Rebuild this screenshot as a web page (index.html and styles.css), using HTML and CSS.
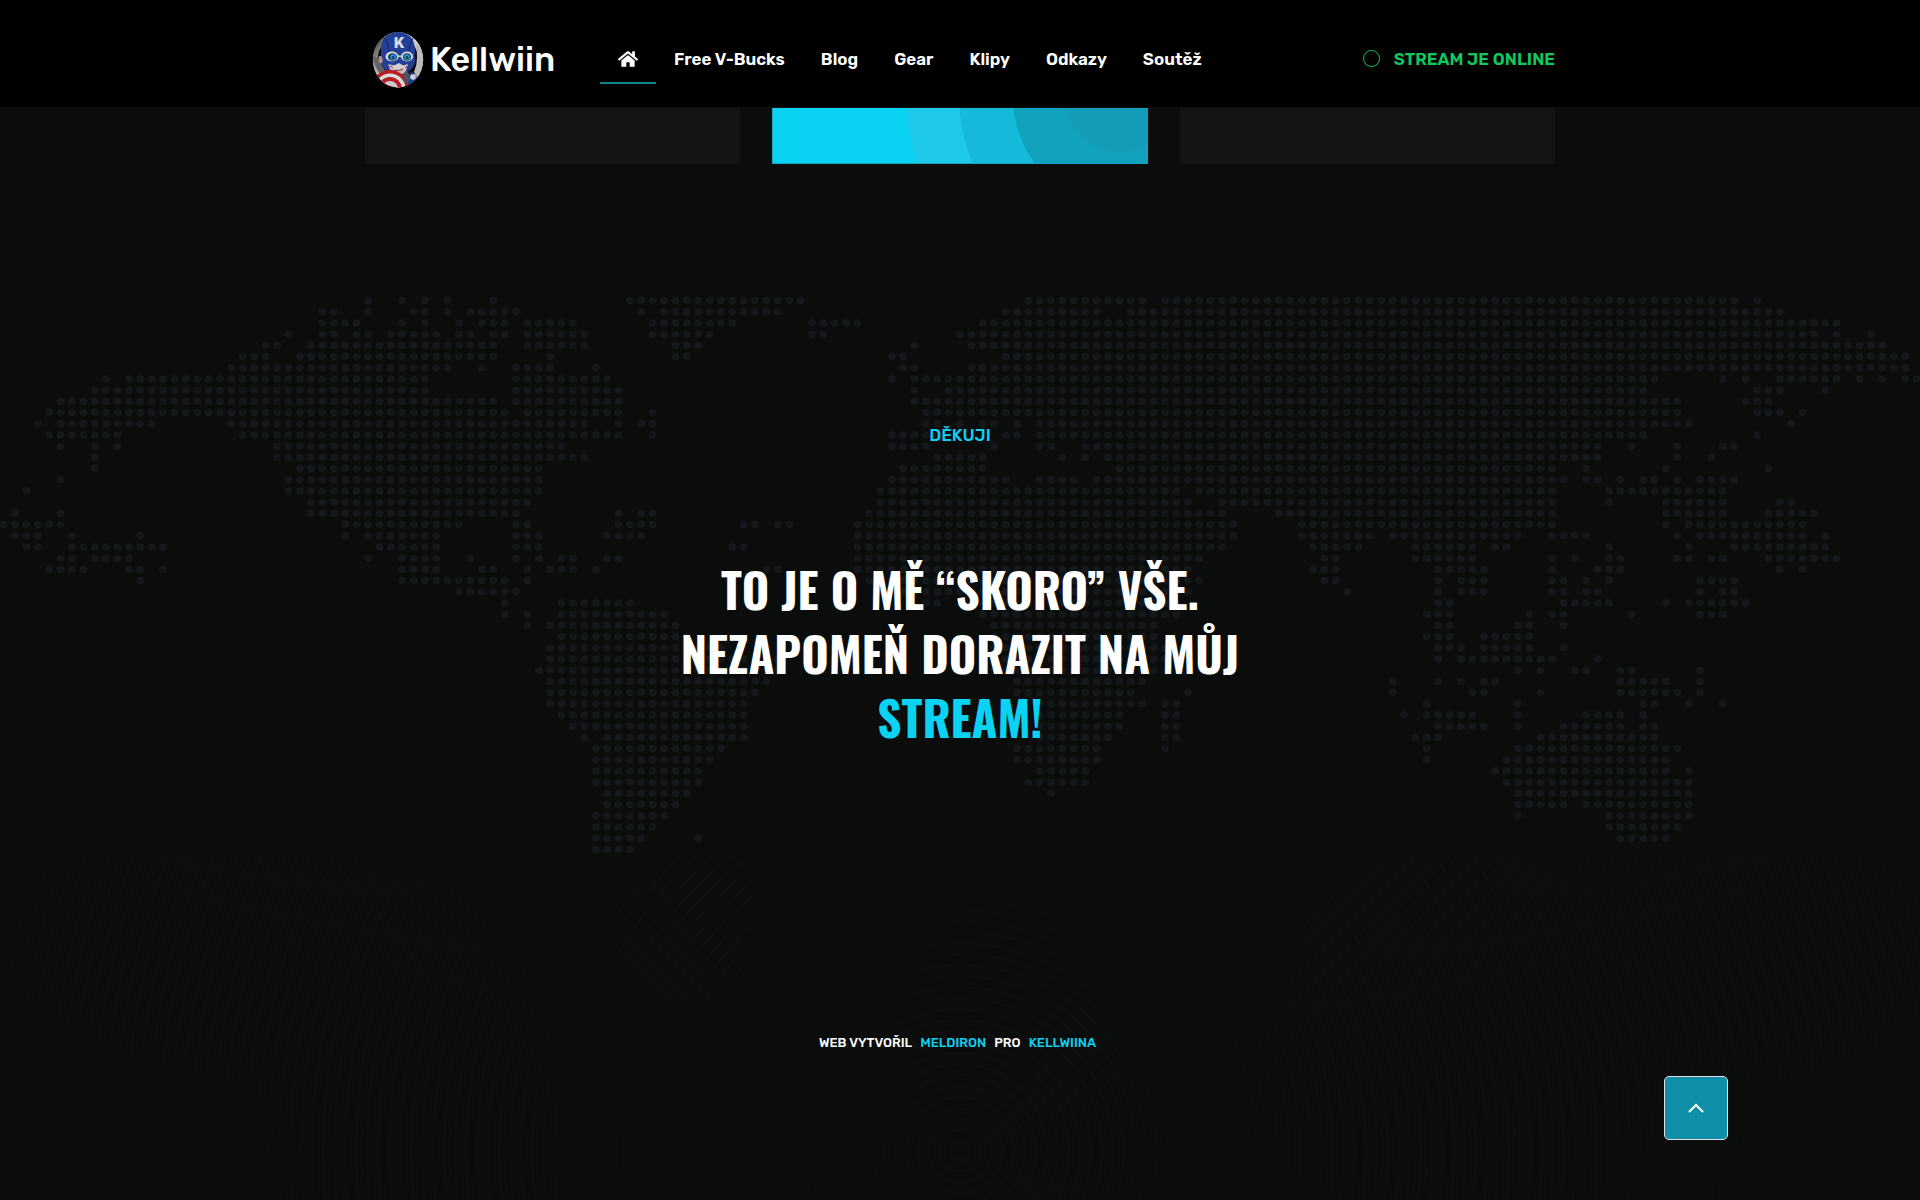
FILE: index.html
```html
<!DOCTYPE html>
<html lang="cs">
<head>
<meta charset="utf-8">
<meta name="viewport" content="width=device-width, initial-scale=1">
<title>Kellwiin</title>
<link rel="stylesheet" href="styles.css">
</head>
<body>
<header class="header">
  <div class="container header-row">
    <a class="brand" href="#">
      <svg class="avatar" viewBox="7 11 53 57" aria-hidden="true">
        <defs>
          <linearGradient id="ring" x1="0" y1="0" x2="1" y2="1"><stop offset="0" stop-color="#3c3c3e"/><stop offset=".5" stop-color="#d4d4d4"/><stop offset="1" stop-color="#77777a"/></linearGradient>
          <clipPath id="disc"><ellipse cx="33" cy="39.500" rx="25.500" ry="28"/></clipPath>
        </defs>
        <g clip-path="url(#disc)">
          <ellipse cx="33" cy="39.500" rx="25.500" ry="28" fill="#08090b"/>
          <ellipse cx="33" cy="40" rx="23" ry="25.500" fill="none" stroke="url(#ring)" stroke-width="5"/>
          <path d="M53 24q5 7 5 16t-5 17l-4-5q3-7 3-14t-1-11z" fill="#b9babc"/>
          <path d="M8 36q6 2 8 8 3 5 6 9l-6 2q-7-8-8-19z" fill="#626469"/>
          <path d="M23 55l9-3 9 3 7-3q4 6 8 13l-12 6H22z" fill="#213e8c"/>
          <path d="M16 42V28q1-15 17-16 16 1 17 17v13q-2 10-16 13Q19 53 16 42z" fill="#243f96"/>
          <path d="M14 36q3-1 4 5l-2 3q-4-3-2-8z" fill="#b78c8c"/>
          <path d="M18 17q5 4 6 14M48 18q-4 5-4 13" fill="none" stroke="#152665" stroke-width="1"/>
          <path d="M23 44q11 3 20 0l-2 7q-3 4-7 4-6-1-8-4z" fill="#cdb6b7"/>
          <path d="M28 46l6-3 5 3 2 4q-4-1-6-2l-5 2q-4 0-6-2z" fill="#cfd2d3"/>
          <path d="M29 50q5 2 9-1M25 46l3 2M40 48l3-2" stroke="#963439" stroke-width="1" fill="none"/>
          <ellipse cx="27" cy="36.500" rx="6.500" ry="5" fill="#d3d7dd"/>
          <ellipse cx="42" cy="36.500" rx="6" ry="5" fill="#d3d7dd"/>
          <ellipse cx="27.500" cy="37" rx="4.500" ry="3.800" fill="#26334f"/>
          <ellipse cx="42" cy="37" rx="4" ry="3.800" fill="#26334f"/>
          <circle cx="28" cy="37" r="3" fill="#2490c6"/><circle cx="42" cy="37" r="3" fill="#2490c6"/>
          <circle cx="28" cy="37.500" r="1.300" fill="#0c3049"/><circle cx="42" cy="37.500" r="1.300" fill="#0c3049"/>
          <path d="M33 37q2-2 3 0" stroke="#c5c8cf" stroke-width="1.500" fill="none"/>
          <circle cx="25" cy="69" r="19" fill="#b91d22"/>
          <circle cx="25" cy="69" r="15.500" fill="#d9dadc"/>
          <circle cx="25" cy="69" r="12" fill="#b91d22"/>
          <circle cx="25" cy="69" r="8" fill="#c7cbd4"/>
          <path d="M39 53l4-2 2 8-3 5-4-4z" fill="#4b5360"/>
          <circle cx="48" cy="57" r="2.800" fill="#ced2dd"/>
        </g>
        <text class="avatar-letter" x="29" y="28">K</text>
      </svg>
      <span>Kellwiin</span>
    </a>
    <nav class="nav" aria-label="Hlavní">
      <a class="nav-link active" href="#" aria-label="Domů">
        <svg class="home" viewBox="0 0 576 512" aria-hidden="true"><path fill="currentColor" d="M280.400 148.300L96 300.100V464a16 16 0 0 0 16 16l112.100-.3a16 16 0 0 0 15.900-16V368a16 16 0 0 1 16-16h64a16 16 0 0 1 16 16v95.600a16 16 0 0 0 16 16.100L464 480a16 16 0 0 0 16-16V300L295.700 148.300a12.200 12.200 0 0 0-15.300 0zM571.600 251.500L488 182.600V44a12 12 0 0 0-12-12h-56a12 12 0 0 0-12 12v72.600L318.500 43a48 48 0 0 0-61 0L4.300 251.500a12 12 0 0 0-1.600 16.900l25.500 31a12 12 0 0 0 16.900 1.600l235.300-193.700a12.200 12.200 0 0 1 15.300 0L531 301a12 12 0 0 0 16.900-1.600l25.500-31a12 12 0 0 0-1.800-16.900z"/></svg>
      </a>
      <a class="nav-link" href="#">Free V-Bucks</a>
      <a class="nav-link" href="#">Blog</a>
      <a class="nav-link" href="#">Gear</a>
      <a class="nav-link" href="#">Klipy</a>
      <a class="nav-link" href="#">Odkazy</a>
      <a class="nav-link" href="#">Soutěž</a>
    </nav>
    <a class="status" href="#"><span class="status-ring"></span>STREAM JE ONLINE</a>
  </div>
</header>
<main>
  <section class="container cards" aria-label="Karty">
    <div class="card"></div>
    <div class="card card-accent"></div>
    <div class="card"></div>
  </section>
  <section class="thanks">
    <svg class="map" viewBox="-.325 -.5 168.640 50" preserveAspectRatio="none" aria-hidden="true">
      <path d="M32 0h.1M35 0h.1M37 0h.1M39 0h.1M43 0h.1M55 0h15.100M90 0h10.100M102 0h50.100M154 0h.1
M28 1h1.100M32 1h.1M36 1h1.100M39 1h.1M41 1h4.100M56 1h.1M58 1h10.100M88 1h8.100M99 1h57.100
M28 2h3.100M35 2h.1M37 2h.1M40 2h.1M42 2h2.100M46 2h4.100M57 2h7.100M71 2h4.100M86 2h75.100
M25 3h.1M28 3h1.100M31 3h1.100M34 3h4.100M40 3h1.100M43 3h1.100M46 3h5.100M57 3h5.100M71 3h1.100M84 3h75.100M161 3h.1M164 3h.1
M23 4h1.100M27 4h16.100M46 4h5.100M59 4h2.100M80 4h.1M85 4h80.100
M21 5h2.100M26 5h17.100M48 5h.1M59 5h1.100M78 5h1.100M88 5h79.100
M20 6h19.100M42 6h.1M45 6h3.100M52 6h.1M79 6h1.100M85 6h82.100
M9 7h.1M11 7h26.100M45 7h8.100M78 7h.1M80 7h65.100M151 7h.1M153 7h.1M156 7h5.100M163 7h.1M165 7h.1M167 7h1.100
M8 8h29.100M45 8h9.100M80 8h.1M83 8h61.100M154 8h2.100M160 8h.1
M5 9h38.100M45 9h9.100M80 9h67.100M153 9h2.100
M4 10h40.100M46 10h8.100M57 10h.1M81 10h66.100M154 10h2.100M158 10h.1
M3 11h.1M5 11h8.100M20 11h31.100M54 11h.1M56 11h1.100M81 11h1.100M84 11h.1M86 11h1.100M89 11h.1M91 11h57.100M157 11h.1
M4 12h6.100M21 12h33.100M57 12h.1M78 12h4.100M88 12h1.100M91 12h53.100M154 12h.1
M5 13h.1M8 13h.1M10 13h.1M24 13h25.100M78 13h3.100M87 13h.1M91 13h1.100M95 13h45.100M143 13h.1M147 13h.1M151 13h1.100
M8 14h.1M24 14h27.100M82 14h4.100M93 14h.1M95 14h.1M97 14h43.100M147 14h.1M150 14h.1
M8 15h.1M26 15h21.100M79 15h7.100M98 15h38.100M139 15h.1M146 15h.1M155 15h.1
M5 16h.1M25 16h22.100M78 16h10.100M91 16h3.100M96 16h41.100M139 16h1.100M142 16h.1M144 16h1.100M147 16h.1M149 16h3.100
M2 17h.1M25 17h22.100M77 17h26.100M105 17h31.100M141 17h10.100
M27 18h19.100M77 18h27.100M107 18h29.100M141 18h.1M146 18h5.100M156 18h1.100
M1 19h.1M5 19h.1M27 19h18.100M54 19h.1M56 19h1.100M76 19h31.100M112 19h24.100M146 19h5.100M155 19h4.100
M0 20h5.100M30 20h10.100M45 20h1.100M54 20h3.100M65 20h1.100M68 20h1.100M75 20h33.100M114 20h22.100M146 20h.1M148 20h10.100
M1 21h2.100M6 21h.1M12 21h.1M30 21h.1M32 21h6.100M45 21h2.100M53 21h3.100M75 21h33.100M114 21h6.100M122 21h11.100M136 21h3.100M147 21h.1M149 21h9.100M160 21h.1
M2 22h1.100M6 22h8.100M33 22h5.100M45 22h2.100M64 22h1.100M75 22h32.100M115 22h4.100M124 22h5.100M131 22h1.100M141 22h.1M148 22h.1M152 22h8.100
M5 23h1.100M8 23h3.100M32 23h.1M35 23h3.100M41 23h.1M45 23h.1M47 23h.1M49 23h1.100M53 23h1.100M75 23h30.100M116 23h1.100M124 23h5.100M136 23h.1M138 23h.1M141 23h1.100M147 23h1.100M150 23h1.100M155 23h6.100
M4 24h3.100M11 24h1.100M14 24h.1M35 24h3.100M42 24h1.100M46 24h.1M48 24h2.100M52 24h.1M67 24h1.100M75 24h29.100M115 24h2.100M126 24h4.100M136 24h.1M140 24h2.100M156 24h.1M158 24h.1
M12 25h.1M35 25h9.100M46 25h.1M76 25h29.100M116 25h1.100M126 25h.1M128 25h2.100M136 25h1.100M139 25h.1M141 25h.1M149 25h3.100
M40 26h5.100M77 26h27.100M118 26h.1M126 26h.1M128 26h2.100M136 26h1.100M139 26h1.100M149 26h.1M151 26h1.100
M44 27h.1M49 27h6.100M81 27h1.100M85 27h18.100M126 27h1.100M137 27h4.100M146 27h.1M148 27h5.100
M44 28h.1M46 28h.1M49 28h9.100M86 28h17.100M125 28h2.100M134 28h.1M136 28h1.100M143 28h.1M149 28h2.100
M46 29h.1M48 29h11.100M87 29h14.100M126 29h1.100M133 29h1.100M137 29h.1
M49 30h11.100M87 30h14.100M125 30h2.100M130 30h4.100
M48 31h15.100M87 31h15.100M126 31h2.100M130 31h4.100M137 31h.1
M48 32h20.100M87 32h15.100M126 32h.1M128 32h8.100M140 32h.1
M47 33h21.100M87 33h14.100M133 33h.1M135 33h.1M138 33h1.100M142 33h1.100M149 33h.1
M48 34h19.100M89 34h11.100M122 34h.1M126 34h.1M128 34h.1M130 34h1.100M142 34h4.100M149 34h.1
M48 35h18.100M89 35h10.100M104 35h.1M122 35h.1M129 35h1.100M135 35h.1M142 35h5.100M149 35h.1
M48 36h17.100M91 36h9.100M102 36h1.100M125 36h.1M133 36h.1M144 36h1.100M148 36h.1M151 36h.1
M49 37h16.100M91 37h7.100M102 37h1.100M123 37h.1M125 37h4.100M133 37h.1M139 37h3.100M144 37h.1
M50 38h15.100M91 38h7.100M102 38h1.100M126 38h4.100M133 38h.1M137 38h5.100M144 38h1.100
M51 39h.1M53 39h12.100M91 39h6.100M102 39h1.100M124 39h2.100M135 39h10.100
M52 40h11.100M89 40h7.100M102 40h.1M125 40h.1M133 40h14.100
M52 41h10.100M89 41h7.100M125 41h.1M132 41h14.100
M52 42h9.100M91 42h4.100M131 42h15.100M148 42h.1
M52 43h9.100M90 43h5.100M132 43h16.100
M53 44h7.100M92 44h.1M133 44h15.100
M53 45h6.100M133 45h4.100M139 45h9.100
M52 46h6.100M133 46h.1M141 46h7.100
M52 47h5.100M141 47h6.100
M52 48h4.100M61 48h.1M142 48h4.100
M52 49h3.100"/>
    </svg>
    <div class="thanks-text">
      <p class="eyebrow">DĚKUJI</p>
      <h2 class="title">TO JE O MĚ “SKORO” VŠE.<br>NEZAPOMEŇ DORAZIT NA MŮJ<br><a href="#">STREAM!</a></h2>
    </div>
  </section>
</main>
<footer class="footer">
  <p class="credits">WEB VYTVOŘIL <a href="#">MELDIRON</a> PRO <a href="#">KELLWIINA</a></p>
</footer>
<button class="to-top" type="button" aria-label="Nahoru">
  <svg viewBox="0 0 18 12" aria-hidden="true"><path d="M2 10l7-7 7 7" fill="none" stroke="currentColor" stroke-width="2"/></svg>
</button>
</body>
</html>
```
FILE: styles.css
```css
* { box-sizing: border-box; }
body {
  margin: 0;
  min-height: 100vh;
  display: flex;
  flex-direction: column;
  background: #0a0d0c;
  color: #fff;
  font-family: Rubik, Inter, "Noto Sans", sans-serif;
  font-size: 17px;
  font-weight: 500;
}
a { color: inherit; text-decoration: none; }
.container { width: 100%; max-width: 1190px; margin: 0 auto; }

.header {
  position: sticky;
  top: 0;
  z-index: 2;
  background: #000;
  border-bottom: 1px solid #101213;
}
.header-row { display: flex; align-items: center; height: 107px; padding-top: 12px; }
.brand {
  display: flex;
  align-items: center;
  gap: 5px;
  width: 235px;
  padding-left: 7px;
  font-size: 34px;
  line-height: 54px;
}
.avatar { width: 53px; height: 57px; }
.avatar-letter { font: 900 14px Inter, sans-serif; fill: #d8dadd; }
.nav { display: flex; flex: 1; font-weight: 600; }
.nav-link {
  display: flex;
  align-items: center;
  height: 48px;
  padding: 0 18px;
  border-bottom: 2px solid transparent;
}
.nav-link.active { border-color: #128090; }
.home { width: 20px; height: 18px; }
.status {
  display: flex;
  align-items: center;
  gap: 14px;
  padding-bottom: 2px;
  color: #0fc860;
  font-weight: 600;
}
.status-ring { width: 17px; height: 17px; border: 1px solid #0fc860; border-radius: 50%; }

.cards { display: grid; grid-template-columns: repeat(3, 1fr); gap: 32px; }
.card { height: 56px; background: #131416; }
.card-accent {
  border: 1px solid #10a4c0;
  border-top-width: 0;
  background: radial-gradient(circle at calc(100% - 27px) -9px,
    #139db8 53px, #11a2bd 54px, #11a2bd 106px, #15b9da 107px, #15b9da 160px,
    #1dc8e8 161px, #1dc8e8 213px, #0ad2f2 214px);
}

.thanks { display: grid; margin-top: 131px; }
.map { grid-area: 1 / 1; width: 100%; height: 560px; }
.map path {
  fill: none;
  stroke: #14181b;
  stroke-width: .68;
  stroke-linecap: round;
  stroke-dasharray: 0 1;
}
.thanks-text { grid-area: 1 / 1; padding-top: 128px; text-align: center; }
.eyebrow { margin: 0; color: #0ad2f2; line-height: 24px; }
.title {
  margin: 110px 0 0;
  font-family: Oswald, "Liberation Sans Narrow", "Liberation Sans", sans-serif;
  font-size: 47px;
  font-weight: 700;
  line-height: 64px;
}
.title a, .credits a { color: #0ad2f2; }

.footer {
  display: grid;
  flex: 1;
  grid-template-rows: 1fr;
  padding: 179px 0 100px;
  position: relative;
  isolation: isolate;
}
.footer::before {
  content: "";
  position: absolute;
  inset: 0;
  z-index: -1;
  background: repeating-radial-gradient(circle at 50% 296px, transparent 0 8px, #0e1112 10px, transparent 11px);
  mask-image:
    radial-gradient(ellipse 300px 180px at 12% 90px, #000 50%, transparent),
    radial-gradient(ellipse 200px 340px at 22% 280px, #000 50%, transparent),
    radial-gradient(ellipse 120px 150px at 36% 60px, #000 50%, transparent),
    radial-gradient(ellipse 220px 300px at 53% 240px, #000 40%, transparent),
    radial-gradient(ellipse 300px 320px at 76% 180px, #000 50%, transparent),
    radial-gradient(ellipse 240px 180px at 92% 90px, #000 50%, transparent);
}
.credits {
  display: flex;
  justify-content: center;
  gap: 8px;
  margin: 0;
  padding-right: 5px;
  font-size: 13px;
  line-height: 18px;
}
.to-top {
  position: fixed;
  right: 10%;
  bottom: 60px;
  display: grid;
  place-items: center;
  width: 64px;
  height: 64px;
  padding: 0;
  color: #fff;
  background: #118fa8;
  border: 1px solid #dfe5e6;
  border-radius: 5px;
  cursor: pointer;
}
.to-top svg { width: 18px; height: 12px; }
```
